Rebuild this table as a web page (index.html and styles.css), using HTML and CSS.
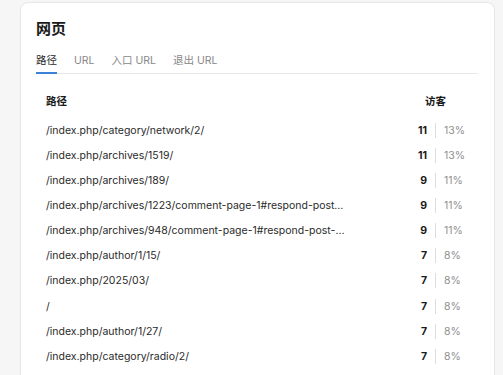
FILE: index.html
```html
<!DOCTYPE html>
<html lang="zh">
<head>
<meta charset="utf-8">
<link rel="stylesheet" href="styles.css">
</head>
<body>
<div class="card">
  <h2 class="title">网页</h2>
  <div class="tabs">
    <span class="tab active">路径</span>
    <span class="tab">URL</span>
    <span class="tab">入口 URL</span>
    <span class="tab">退出 URL</span>
  </div>
  <div class="table">
    <div class="head">
      <span class="path">路径</span>
      <span class="visitors">访客</span>
    </div>
    <div class="row"><span class="path">/index.php/category/network/2/</span><span class="num">11</span><span class="sep"></span><span class="pct">13%</span></div>
    <div class="row"><span class="path">/index.php/archives/1519/</span><span class="num">11</span><span class="sep"></span><span class="pct">13%</span></div>
    <div class="row"><span class="path">/index.php/archives/189/</span><span class="num">9</span><span class="sep"></span><span class="pct">11%</span></div>
    <div class="row"><span class="path">/index.php/archives/1223/comment-page-1#respond-post-1223</span><span class="num">9</span><span class="sep"></span><span class="pct">11%</span></div>
    <div class="row"><span class="path">/index.php/archives/948/comment-page-1#respond-post-948</span><span class="num">9</span><span class="sep"></span><span class="pct">11%</span></div>
    <div class="row"><span class="path">/index.php/author/1/15/</span><span class="num">7</span><span class="sep"></span><span class="pct">8%</span></div>
    <div class="row"><span class="path">/index.php/2025/03/</span><span class="num">7</span><span class="sep"></span><span class="pct">8%</span></div>
    <div class="row"><span class="path">/</span><span class="num">7</span><span class="sep"></span><span class="pct">8%</span></div>
    <div class="row"><span class="path">/index.php/author/1/27/</span><span class="num">7</span><span class="sep"></span><span class="pct">8%</span></div>
    <div class="row"><span class="path">/index.php/category/radio/2/</span><span class="num">7</span><span class="sep"></span><span class="pct">8%</span></div>
  </div>
</div>
</body>
</html>
```
FILE: styles.css
```css
html, body {
  margin: 0;
  padding: 0;
}
body {
  background: #f6f6f7;
  font-family: Inter, "Noto Sans CJK SC", sans-serif;
  color: #1f1f1f;
  padding: 2px 8px 0 20px;
  height: 375px;
  box-sizing: border-box;
  overflow: hidden;
}
.card {
  background: #fff;
  border: 1px solid #e6e6e6;
  border-radius: 8px;
  padding: 15px 16px 0 15px;
  height: 400px;
  box-sizing: border-box;
}
.title {
  margin: 0;
  font-size: 15px;
  font-weight: 700;
  line-height: 22px;
  color: #1a1a1a;
}
.tabs {
  display: flex;
  gap: 17px;
  margin-top: 13px;
  border-bottom: 1px solid #e8e8e8;
}
.tab {
  font-size: 10.5px;
  line-height: 16px;
  padding-bottom: 4px;
  color: #888;
}
.tab.active {
  color: #1f1f1f;
  border-bottom: 2px solid #3b82d6;
  padding-bottom: 3px;
  margin-bottom: -1px;
}
.table {
  padding: 20px 10px 0 10px;
}
.head {
  display: flex;
  font-size: 10.5px;
  font-weight: 700;
  line-height: 16px;
  margin-bottom: 7.5px;
  color: #1a1a1a;
}
.head .path {
  flex: 1;
}
.head .visitors {
  margin-right: 22px;
}
.row {
  display: flex;
  align-items: center;
  height: 25.15px;
  font-size: 10.5px;
}
.row .path {
  width: 300px;
  white-space: nowrap;
  overflow: hidden;
  text-overflow: ellipsis;
  color: #2a2a2a;
}
.row .num {
  flex: 1;
  text-align: right;
  font-weight: 700;
  color: #1a1a1a;
}
.sep {
  width: 1px;
  height: 15px;
  background: #dddddd;
  margin: 0 8px 0 8px;
}
.pct {
  width: 24px;
  color: #8f8f8f;
}
```
